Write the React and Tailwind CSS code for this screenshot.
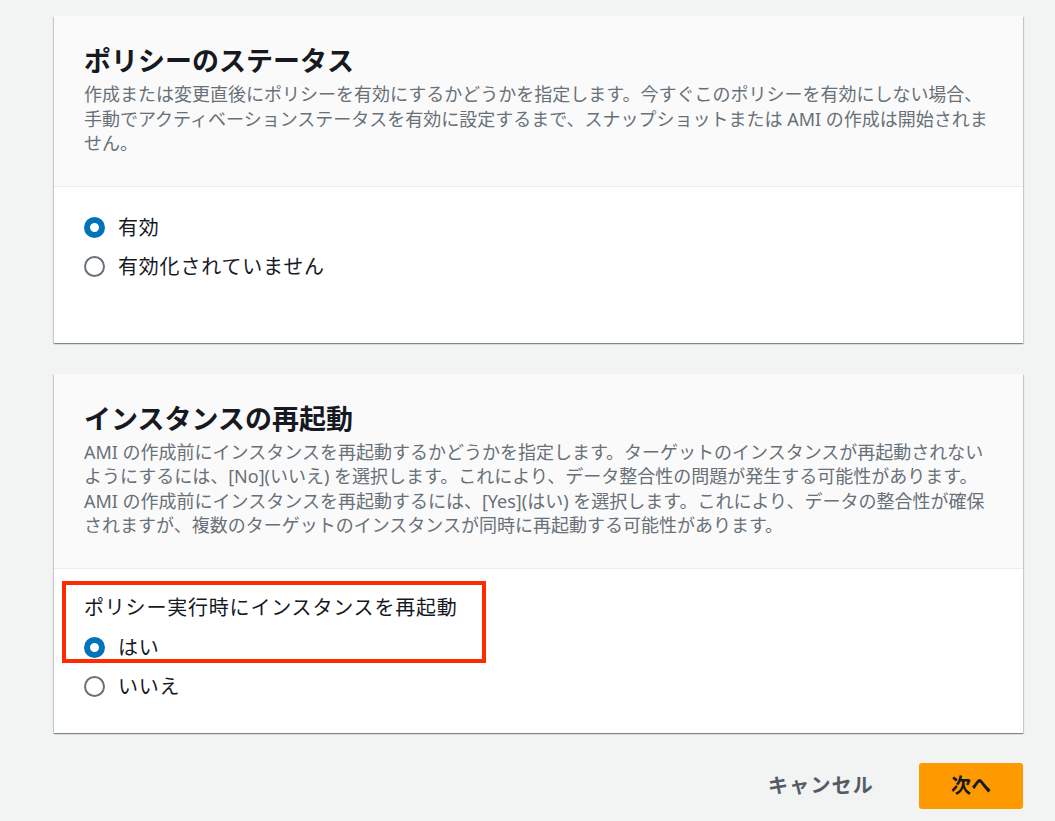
import React from "react";

const font = { fontFamily: '"Noto Sans", "Noto Sans CJK JP", sans-serif' };

function Radio({ checked, label }) {
  return (
    <div className="flex items-center gap-[13px] h-[30px]">
      {checked ? (
        <span className="w-[21px] h-[21px] rounded-full border-[6px] border-[#0073bb] bg-white shrink-0" />
      ) : (
        <span className="w-[21px] h-[21px] rounded-full border-2 border-[#687078] bg-white shrink-0" />
      )}
      <span className="text-[20px] leading-[30px] tracking-[0.8px] text-[#16191f]">{label}</span>
    </div>
  );
}

function Card({ title, desc, children, bodyClass }) {
  return (
    <div className="bg-white shadow-[0_1px_1px_0_rgba(0,28,36,0.3),1px_1px_1px_0_rgba(0,28,36,0.15),-1px_1px_1px_0_rgba(0,28,36,0.15)]">
      <div className="bg-[#fafafa] border-b border-[#eaeded] px-[30px] pt-[28px] pb-[30px]">
        <h2 className="text-[27px] leading-[34px] font-bold text-[#16191f]">{title}</h2>
        <p className="mt-[4px] text-[18px] leading-[24.5px] text-[#687078]">{desc}</p>
      </div>
      <div className={bodyClass}>{children}</div>
    </div>
  );
}

export default function App() {
  return (
    <div style={font} className="min-h-[821px] bg-[#f2f3f3] pl-[54px] pr-[32px] pt-[16px]">
      <div className="flex flex-col gap-[31px]">
        <Card
          title="ポリシーのステータス"
          desc="作成または変更直後にポリシーを有効にするかどうかを指定します。今すぐこのポリシーを有効にしない場合、手動でアクティベーションステータスを有効に設定するまで、スナップショットまたは AMI の作成は開始されません。"
          bodyClass="px-[30px] pt-[26px] pb-[61px] flex flex-col gap-[9px]"
        >
          <Radio checked label="有効" />
          <Radio label="有効化されていません" />
        </Card>
        <Card
          title="インスタンスの再起動"
          desc="AMI の作成前にインスタンスを再起動するかどうかを指定します。ターゲットのインスタンスが再起動されないようにするには、[No](いいえ) を選択します。これにより、データ整合性の問題が発生する可能性があります。AMI の作成前にインスタンスを再起動するには、[Yes](はい) を選択します。これにより、データの整合性が確保されますが、複数のターゲットのインスタンスが同時に再起動する可能性があります。"
          bodyClass="relative px-[30px] pt-[24px] pb-[31px] flex flex-col gap-[9px]"
        >
          <div className="text-[20px] leading-[30px] tracking-[0.8px] text-[#16191f] mb-[1px]">ポリシー実行時にインスタンスを再起動</div>
          <Radio checked label="はい" />
          <Radio label="いいえ" />
          <div className="absolute left-[8px] top-[12px] w-[424px] h-[82px] border-4 border-[#ff2a00] pointer-events-none" />
        </Card>
      </div>
      <div className="flex justify-end items-center gap-[45px] mt-[30px]">
        <button className="text-[20px] font-bold tracking-[1.2px] text-[#545b64]">キャンセル</button>
        <button className="w-[104px] h-[46px] rounded-[3px] bg-[#ff9900] text-[20px] font-bold text-[#16191f]">次へ</button>
      </div>
    </div>
  );
}
